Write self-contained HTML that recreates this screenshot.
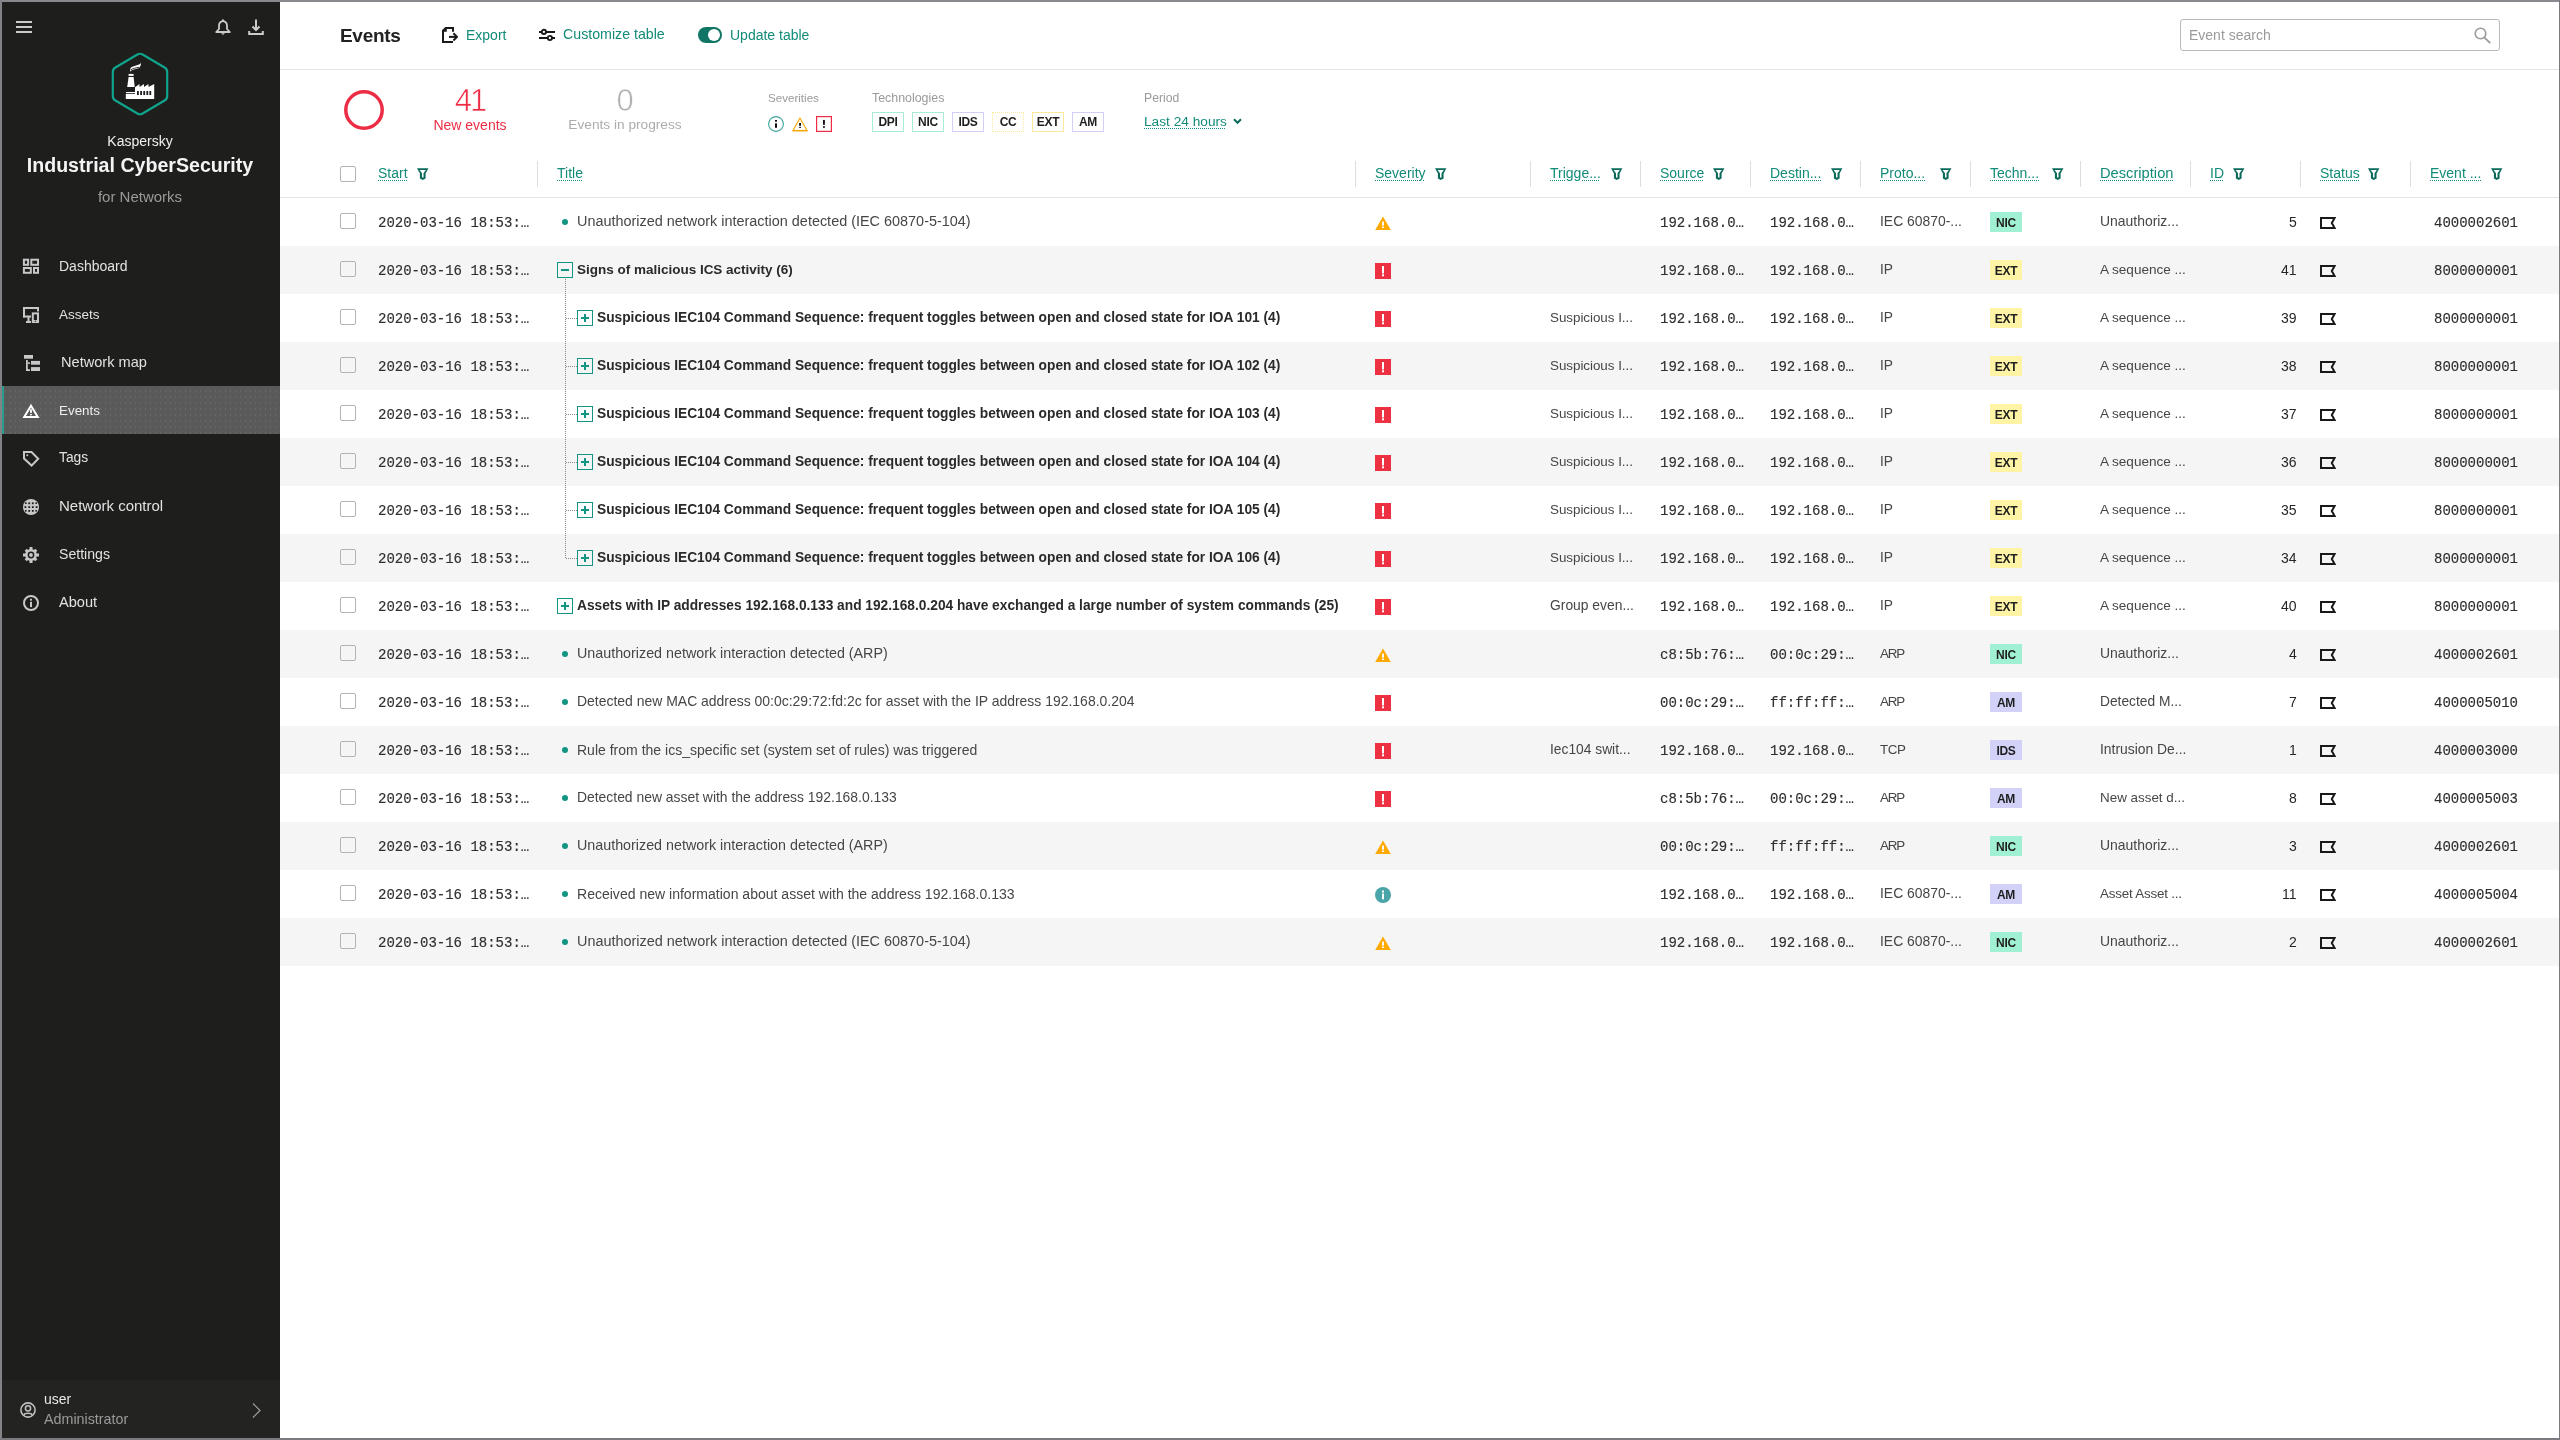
<!DOCTYPE html>
<html><head><meta charset="utf-8">
<style>
*{box-sizing:border-box;margin:0;padding:0}
html,body{width:2560px;height:1440px;overflow:hidden;background:#fff;font-family:"Liberation Sans",sans-serif;position:relative}
.t{position:absolute;line-height:1;white-space:nowrap;will-change:transform}
.b{position:absolute;display:block}
.u{text-decoration:underline dotted;text-underline-offset:2px;text-decoration-thickness:1px}
</style></head><body>

<div class="b" style="left:0px;top:0px;width:2560px;height:2px;background:#88898c"></div>
<div class="b" style="left:0px;top:0px;width:2px;height:1440px;background:#828386"></div>
<div class="b" style="left:0px;top:1438px;width:2560px;height:2px;background:#7a7b7e"></div>
<div class="b" style="left:2559px;top:0px;width:1px;height:1440px;background:#7a7b7e"></div>
<div class="b" style="left:2px;top:2px;width:278px;height:1436px;background:#1e1e1d"></div>
<svg class="b" style="left:16px;top:21px" width="16" height="12" viewBox="0 0 16 12"><rect x="0" y="0" width="16" height="2" fill="#cbcbcb"/><rect x="0" y="5" width="16" height="2" fill="#cbcbcb"/><rect x="0" y="10" width="16" height="2" fill="#cbcbcb"/></svg>
<svg class="b" style="left:215px;top:19px" width="16" height="16" viewBox="0 0 16 16"><path d="M8 1.2 L9 2.3 C11.3 2.8 12 4.8 12 7 L12 10 L14.8 13 L1.2 13 L4 10 L4 7 C4 4.8 4.7 2.8 7 2.3 Z" fill="none" stroke="#cbcbcb" stroke-width="1.8" stroke-linejoin="round"/><path d="M6 14.2 L10 14.2 L8 16 Z" fill="#cbcbcb"/></svg>
<svg class="b" style="left:248px;top:19px" width="16" height="16" viewBox="0 0 16 16"><path d="M8 0.5 L8 10.5" stroke="#cbcbcb" stroke-width="2"/><path d="M4.5 7.5 L8 11 L11.5 7.5" fill="none" stroke="#cbcbcb" stroke-width="2"/><path d="M1.2 12 L1.2 15 L14.8 15 L14.8 12" fill="none" stroke="#cbcbcb" stroke-width="2"/></svg>
<svg class="b" style="left:110px;top:52px" width="60" height="64" viewBox="0 0 60 64"><path d="M27.41 2.52 Q30 1.0 32.59 2.52 L54.61 15.48 Q57.2 17.0 57.20 20.00 L57.20 44.00 Q57.2 47.0 54.61 48.52 L32.59 61.48 Q30 63.0 27.41 61.48 L5.39 48.52 Q2.8 47.0 2.80 44.00 L2.80 20.00 Q2.8 17.0 5.39 15.48 Z" fill="none" stroke="#0fa58b" stroke-width="2.2" stroke-linejoin="round"/><g fill="#fff"><path d="M17.2 35 L18.6 25 L23.6 25 L24.7 35 Z"/><rect x="18.6" y="21.9" width="5" height="2"/><rect x="16" y="40" width="9" height="1.2"/><path d="M15.8 42 L25 42 L25 35.2 L29.5 32 L29.5 35 L34 32 L34 35 L38.5 32 L38.5 35 L44.2 32 L44.2 47 L15.8 47 Z"/><path d="M20 19.7 C22 17.6 26 17 28.6 16.3 C30.2 15.4 31 13 31.1 11.1 C29.5 12.9 26 13.5 23 14.4 C21.4 15 20.3 15.8 20.3 17 Z"/></g><path d="M20.8 17.8 C23 16.4 26 15.9 29 15.2" fill="none" stroke="#1e1e1d" stroke-width="0.9"/><g fill="#1e1e1d"><rect x="27" y="39" width="1.8" height="4"/><rect x="30.2" y="39" width="1.8" height="4"/><rect x="33.3" y="39" width="1.8" height="4"/><rect x="36.4" y="39" width="1.8" height="4"/><rect x="39.4" y="39" width="1.8" height="4"/></g></svg>
<div class="t" style="left:-60px;width:400px;text-align:center;top:134.15px;font-size:14px;color:#f0f0f0;font-weight:normal;font-family:'Liberation Sans',sans-serif;">Kaspersky</div>
<div class="t" style="left:-60px;width:400px;text-align:center;top:156.41px;font-size:19.6px;color:#f4f4f4;font-weight:bold;font-family:'Liberation Sans',sans-serif;">Industrial CyberSecurity</div>
<div class="t" style="left:-60px;width:400px;text-align:center;top:189.30px;font-size:15px;color:#9a9a9a;font-weight:normal;font-family:'Liberation Sans',sans-serif;">for Networks</div>
<div class="b" style="left:2px;top:386px;width:278px;height:48px;background-color:#5a5a5a;background-image:radial-gradient(circle,#686868 0.5px,transparent 0.8px);background-size:5px 6px;background-position:1px 2px"></div>
<div class="b" style="left:2px;top:386px;width:2px;height:48px;background:#2a9d8f"></div>
<div class="t" style="left:59px;top:259.15px;font-size:14px;color:#e2e2e2;font-weight:normal;font-family:'Liberation Sans',sans-serif;">Dashboard</div>
<div class="t" style="left:59px;top:307.57px;font-size:13.5px;color:#e2e2e2;font-weight:normal;font-family:'Liberation Sans',sans-serif;">Assets</div>
<div class="t" style="left:61px;top:354.64px;font-size:14.6px;color:#e2e2e2;font-weight:normal;font-family:'Liberation Sans',sans-serif;">Network map</div>
<div class="t" style="left:59px;top:403.66px;font-size:13.4px;color:#eeeeee;font-weight:normal;font-family:'Liberation Sans',sans-serif;">Events</div>
<div class="t" style="left:59px;top:451.32px;font-size:13.8px;color:#e2e2e2;font-weight:normal;font-family:'Liberation Sans',sans-serif;">Tags</div>
<div class="t" style="left:59px;top:498.30px;font-size:15px;color:#e2e2e2;font-weight:normal;font-family:'Liberation Sans',sans-serif;">Network control</div>
<div class="t" style="left:59px;top:547.06px;font-size:14.1px;color:#e2e2e2;font-weight:normal;font-family:'Liberation Sans',sans-serif;">Settings</div>
<div class="t" style="left:59px;top:594.64px;font-size:14.6px;color:#e2e2e2;font-weight:normal;font-family:'Liberation Sans',sans-serif;">About</div>
<svg class="b" style="left:22px;top:258px" width="18" height="17" viewBox="0 0 18 17"><g fill="none" stroke="#c8c8c8" stroke-width="2"><rect x="1.9" y="1.7" width="4.2" height="5.1"/><rect x="9.3" y="1.7" width="6.7" height="5.1"/><rect x="1.9" y="10" width="6.9" height="4.8"/><rect x="12" y="10" width="4" height="4.8"/></g></svg>
<svg class="b" style="left:22px;top:306px" width="18" height="18" viewBox="0 0 18 18"><g fill="#c8c8c8"><rect x="1" y="1" width="16" height="2"/><rect x="1" y="1" width="2" height="10.5"/><rect x="1" y="9.5" width="8" height="2"/><rect x="15" y="1" width="2" height="4.5"/><rect x="4" y="15" width="5" height="2"/><rect x="5.5" y="11" width="2" height="4"/><rect x="9.8" y="6.4" width="7.2" height="10.6"/></g><rect x="11.8" y="8.4" width="3.2" height="5.6" fill="#1e1e1d"/><rect x="12.7" y="14.7" width="1.4" height="1" fill="#1e1e1d"/></svg>
<svg class="b" style="left:24px;top:355px" width="16" height="16" viewBox="0 0 16 16"><g fill="#c8c8c8"><rect x="0" y="0" width="9" height="3.7"/><rect x="2" y="5" width="1.8" height="11"/><rect x="2" y="14.2" width="4" height="1.8"/><rect x="3.8" y="7.3" width="2.2" height="1.6"/><rect x="7" y="5.9" width="9" height="3.8"/><rect x="7" y="12.1" width="9" height="3.9"/></g></svg>
<svg class="b" style="left:22px;top:403px" width="18" height="16" viewBox="0 0 18 16"><path d="M9 2.8 L15.8 14 L2.2 14 Z" fill="none" stroke="#fff" stroke-width="2" stroke-linejoin="miter"/><rect x="8.1" y="6.3" width="1.8" height="3.6" fill="#fff"/><rect x="8.1" y="11" width="1.8" height="1.3" fill="#fff"/></svg>
<svg class="b" style="left:22px;top:450px" width="18" height="18" viewBox="0 0 18 18"><path d="M2 2 L9.5 2 L16.2 8.8 L9.6 15.6 L2 8.6 Z" fill="none" stroke="#c8c8c8" stroke-width="2" stroke-linejoin="miter"/><circle cx="5.3" cy="5.3" r="1" fill="#c8c8c8"/></svg>
<svg class="b" style="left:23px;top:499px" width="16" height="16" viewBox="0 0 16 16"><circle cx="8" cy="8" r="8" fill="#c8c8c8"/><g fill="#1e1e1d"><rect x="2" y="3.4" width="1.6" height="1.6"/><rect x="5.3" y="3.4" width="1.8" height="1.8"/><rect x="8.9" y="3.4" width="1.8" height="1.8"/><rect x="12.4" y="3.4" width="1.6" height="1.6"/><rect x="1.5" y="7.2" width="1.8" height="1.8"/><rect x="5.3" y="7.2" width="1.8" height="1.8"/><rect x="8.9" y="7.2" width="1.8" height="1.8"/><rect x="12.7" y="7.2" width="1.8" height="1.8"/><rect x="2" y="11" width="1.6" height="1.6"/><rect x="5.3" y="11" width="1.8" height="1.8"/><rect x="8.9" y="11" width="1.8" height="1.8"/><rect x="12.4" y="11" width="1.6" height="1.6"/></g></svg>
<svg class="b" style="left:23px;top:547px" width="16" height="16" viewBox="0 0 16 16"><g fill="#c8c8c8"><circle cx="8" cy="8" r="5.9"/><rect x="6.5" y="0" width="3" height="16"/><rect x="0" y="6.5" width="16" height="3"/><rect x="6.5" y="0.5" width="3" height="15" transform="rotate(45 8 8)"/><rect x="6.5" y="0.5" width="3" height="15" transform="rotate(-45 8 8)"/></g><circle cx="8" cy="8" r="3.4" fill="#1e1e1d"/><circle cx="8" cy="8" r="1.9" fill="#c8c8c8"/></svg>
<svg class="b" style="left:23px;top:595px" width="16" height="16" viewBox="0 0 16 16"><circle cx="8" cy="8" r="7" fill="none" stroke="#c8c8c8" stroke-width="2"/><rect x="7" y="6.8" width="2" height="5.3" fill="#c8c8c8"/><rect x="7" y="3.8" width="2" height="1.8" fill="#c8c8c8"/></svg>
<div class="b" style="left:2px;top:1380px;width:278px;height:58px;background:#232322"></div>
<svg class="b" style="left:20px;top:1402px" width="16" height="16" viewBox="0 0 16 16"><circle cx="8" cy="8" r="7.1" fill="none" stroke="#c0c0c0" stroke-width="1.6"/><circle cx="8" cy="6.3" r="2.6" fill="none" stroke="#c0c0c0" stroke-width="1.5"/><path d="M3.8 13.2 C4.8 10.6 11.2 10.6 12.2 13.2" fill="none" stroke="#c0c0c0" stroke-width="1.5"/></svg>
<div class="t" style="left:44px;top:1392.15px;font-size:14px;color:#e8e8e8;font-weight:normal;font-family:'Liberation Sans',sans-serif;">user</div>
<div class="t" style="left:44px;top:1411.90px;font-size:14.3px;color:#9a9a9a;font-weight:normal;font-family:'Liberation Sans',sans-serif;">Administrator</div>
<svg class="b" style="left:252px;top:1403px" width="9" height="15" viewBox="0 0 9 15"><path d="M1 0.5 L8 7.5 L1 14.5" fill="none" stroke="#a0a0a0" stroke-width="1.2"/></svg>
<div class="b" style="left:280px;top:69px;width:2279px;height:1px;background:#e4e4e4"></div>
<div class="t" style="left:340px;top:25.92px;font-size:19px;color:#222;font-weight:bold;font-family:'Liberation Sans',sans-serif;letter-spacing:-0.3px;">Events</div>
<svg class="b" style="left:442px;top:27px" width="16" height="16" viewBox="0 0 16 16"><path d="M1 4 L1 15 L11 15 M3.5 1 L12 1 M11 0 L11 4.7" fill="none" stroke="#1a1a1a" stroke-width="2"/><path d="M0 3.3 L3.3 0 L4.8 0 L4.8 4.8 L0 4.8 Z" fill="#1a1a1a"/><path d="M7 9.9 L14.3 9.9" stroke="#1a1a1a" stroke-width="2"/><path d="M11.4 6.3 L15 9.9 L11.4 13.5" fill="none" stroke="#1a1a1a" stroke-width="2"/></svg>
<div class="t" style="left:466px;top:27.65px;font-size:14px;color:#128b78;font-weight:normal;font-family:'Liberation Sans',sans-serif;">Export</div>
<svg class="b" style="left:539px;top:28px" width="16" height="14" viewBox="0 0 16 14"><path d="M0 3.9 L16 3.9 M0 10 L16 10" stroke="#1a1a1a" stroke-width="2"/><circle cx="4.9" cy="3.9" r="2.1" fill="#fff" stroke="#1a1a1a" stroke-width="1.9"/><circle cx="10.9" cy="10" r="2.1" fill="#fff" stroke="#1a1a1a" stroke-width="1.9"/></svg>
<div class="t" style="left:563px;top:27.48px;font-size:14.2px;color:#128b78;font-weight:normal;font-family:'Liberation Sans',sans-serif;">Customize table</div>
<div class="b" style="left:698px;top:27px;width:24px;height:16px;background:#107565;border-radius:8px"></div>
<div class="b" style="left:708px;top:29px;width:12px;height:12px;background:#fff;border-radius:6px"></div>
<div class="t" style="left:730px;top:27.65px;font-size:14px;color:#128b78;font-weight:normal;font-family:'Liberation Sans',sans-serif;">Update table</div>
<div class="b" style="left:2180px;top:19px;width:320px;height:32px;border:1px solid #b9b9b9;border-radius:3px;background:#fff"></div>
<div class="t" style="left:2189px;top:27.65px;font-size:14px;color:#9a9a9a;font-weight:normal;font-family:'Liberation Sans',sans-serif;">Event search</div>
<svg class="b" style="left:2474px;top:27px" width="18" height="17" viewBox="0 0 18 17"><circle cx="6.5" cy="6.5" r="5.3" fill="none" stroke="#9a9a9a" stroke-width="1.6"/><path d="M10.3 10.3 L16.2 16.2" stroke="#9a9a9a" stroke-width="1.8"/></svg>
<svg class="b" style="left:344px;top:90px" width="40" height="40" viewBox="0 0 40 40"><circle cx="20" cy="20" r="18.2" fill="none" stroke="#ec2d45" stroke-width="3.5"/></svg>
<div class="t" style="left:270px;width:400px;text-align:center;top:84.76px;font-size:31px;color:#ec2d45;font-weight:normal;font-family:'Liberation Sans',sans-serif;letter-spacing:-2px;-webkit-text-stroke:0.6px #fff;">41</div>
<div class="t" style="left:270px;width:400px;text-align:center;top:118.15px;font-size:14px;color:#ec2d45;font-weight:normal;font-family:'Liberation Sans',sans-serif;">New events</div>
<div class="t" style="left:425px;width:400px;text-align:center;top:84.76px;font-size:31px;color:#b0b0b0;font-weight:normal;font-family:'Liberation Sans',sans-serif;-webkit-text-stroke:0.6px #fff;">0</div>
<div class="t" style="left:425px;width:400px;text-align:center;top:118.40px;font-size:13.7px;color:#acacac;font-weight:normal;font-family:'Liberation Sans',sans-serif;">Events in progress</div>
<div class="t" style="left:768px;top:92.18px;font-size:11.6px;color:#9a9a9a;font-weight:normal;font-family:'Liberation Sans',sans-serif;">Severities</div>
<div class="t" style="left:872px;top:91.50px;font-size:12.4px;color:#9a9a9a;font-weight:normal;font-family:'Liberation Sans',sans-serif;">Technologies</div>
<div class="t" style="left:1144px;top:91.67px;font-size:12.2px;color:#9a9a9a;font-weight:normal;font-family:'Liberation Sans',sans-serif;">Period</div>
<svg class="b" style="left:768px;top:116px" width="16" height="16" viewBox="0 0 16 16"><circle cx="8" cy="8" r="7.4" fill="none" stroke="#3aa8a0" stroke-width="1.1"/><rect x="7" y="7.3" width="2" height="4.5" fill="#111"/><rect x="7" y="4" width="2" height="1.7" fill="#111"/></svg>
<svg class="b" style="left:792px;top:116px" width="16" height="16" viewBox="0 0 16 16"><path d="M8 2.2 L15.2 14.6 L0.8 14.6 Z" fill="none" stroke="#f6a800" stroke-width="1.1"/><path d="M0.8 14.6 L15.2 14.6" stroke="#f6a800" stroke-width="1.4"/><rect x="7.1" y="7" width="1.9" height="2.8" fill="#111"/><rect x="7.1" y="10.9" width="1.9" height="1" fill="#111"/></svg>
<svg class="b" style="left:816px;top:116px" width="16" height="16" viewBox="0 0 16 16"><rect x="0.6" y="0.6" width="14.8" height="14.8" fill="none" stroke="#ee2d45" stroke-width="1.2"/><rect x="7" y="4" width="1.9" height="4.8" fill="#111"/><rect x="7" y="10.2" width="1.9" height="1.6" fill="#111"/></svg>
<div class="b" style="left:872px;top:112px;width:32px;height:20px;border:1px solid #a6ecd6;background:#fff"></div>
<div class="t" style="left:688px;width:400px;text-align:center;top:116.34px;font-size:12px;color:#1e1e1e;font-weight:bold;font-family:'Liberation Sans',sans-serif;letter-spacing:-0.3px;">DPI</div>
<div class="b" style="left:912px;top:112px;width:32px;height:20px;border:1px solid #a6ecd6;background:#fff"></div>
<div class="t" style="left:728px;width:400px;text-align:center;top:116.34px;font-size:12px;color:#1e1e1e;font-weight:bold;font-family:'Liberation Sans',sans-serif;letter-spacing:-0.3px;">NIC</div>
<div class="b" style="left:952px;top:112px;width:32px;height:20px;border:1px solid #cfcff7;background:#fff"></div>
<div class="t" style="left:768px;width:400px;text-align:center;top:116.34px;font-size:12px;color:#1e1e1e;font-weight:bold;font-family:'Liberation Sans',sans-serif;letter-spacing:-0.3px;">IDS</div>
<div class="b" style="left:992px;top:112px;width:32px;height:20px;border:1px dotted #fbe89a;background:#fff"></div>
<div class="t" style="left:808px;width:400px;text-align:center;top:116.34px;font-size:12px;color:#1e1e1e;font-weight:bold;font-family:'Liberation Sans',sans-serif;letter-spacing:-0.3px;">CC</div>
<div class="b" style="left:1032px;top:112px;width:32px;height:20px;border:1px solid #fbe89a;background:#fff"></div>
<div class="t" style="left:848px;width:400px;text-align:center;top:116.34px;font-size:12px;color:#1e1e1e;font-weight:bold;font-family:'Liberation Sans',sans-serif;letter-spacing:-0.3px;">EXT</div>
<div class="b" style="left:1072px;top:112px;width:32px;height:20px;border:1px solid #cfcff7;background:#fff"></div>
<div class="t" style="left:888px;width:400px;text-align:center;top:116.34px;font-size:12px;color:#1e1e1e;font-weight:bold;font-family:'Liberation Sans',sans-serif;letter-spacing:-0.3px;">AM</div>
<div class="t" style="left:1144px;top:114.90px;font-size:13.7px;color:#128b78;font-weight:normal;font-family:'Liberation Sans',sans-serif;"><span class="u">Last 24 hours</span></div>
<svg class="b" style="left:1233px;top:118px" width="9" height="7" viewBox="0 0 9 7"><path d="M1 1.2 L4.5 4.8 L8 1.2" fill="none" stroke="#0b6b5b" stroke-width="2"/></svg>
<div class="b" style="left:280px;top:197px;width:2279px;height:1px;background:#e4e4e4"></div>
<div class="b" style="left:340px;top:166px;width:16px;height:16px;border:1px solid #b3b3b3;border-radius:2px;background:transparent"></div>
<div class="t" style="left:378px;top:166.15px;font-size:14px;color:#128b78;font-weight:normal;font-family:'Liberation Sans',sans-serif;"><span class="u">Start</span></div>
<svg class="b" style="left:417px;top:168px" width="12" height="12" viewBox="0 0 12 12"><path d="M0 0.2 L11.4 0.2 L8.6 5.6 L8.6 10.6 L5.7 12 L2.9 10.6 L2.9 5.6 Z" fill="#0b6b5b"/><path d="M2.6 2 L8.8 2 L6.5 5.3 L6.5 9.6 L5 9.6 L5 5.3 Z" fill="#fff"/></svg>
<div class="b" style="left:537px;top:161px;width:1px;height:26px;background:#dedede"></div>
<div class="t" style="left:557px;top:166.15px;font-size:14px;color:#128b78;font-weight:normal;font-family:'Liberation Sans',sans-serif;"><span class="u">Title</span></div>
<div class="b" style="left:1355px;top:161px;width:1px;height:26px;background:#dedede"></div>
<div class="t" style="left:1375px;top:166.15px;font-size:14px;color:#128b78;font-weight:normal;font-family:'Liberation Sans',sans-serif;"><span class="u">Severity</span></div>
<svg class="b" style="left:1435px;top:168px" width="12" height="12" viewBox="0 0 12 12"><path d="M0 0.2 L11.4 0.2 L8.6 5.6 L8.6 10.6 L5.7 12 L2.9 10.6 L2.9 5.6 Z" fill="#0b6b5b"/><path d="M2.6 2 L8.8 2 L6.5 5.3 L6.5 9.6 L5 9.6 L5 5.3 Z" fill="#fff"/></svg>
<div class="b" style="left:1530px;top:161px;width:1px;height:26px;background:#dedede"></div>
<div class="t" style="left:1550px;top:166.15px;font-size:14px;color:#128b78;font-weight:normal;font-family:'Liberation Sans',sans-serif;"><span class="u">Trigge...</span></div>
<svg class="b" style="left:1611px;top:168px" width="12" height="12" viewBox="0 0 12 12"><path d="M0 0.2 L11.4 0.2 L8.6 5.6 L8.6 10.6 L5.7 12 L2.9 10.6 L2.9 5.6 Z" fill="#0b6b5b"/><path d="M2.6 2 L8.8 2 L6.5 5.3 L6.5 9.6 L5 9.6 L5 5.3 Z" fill="#fff"/></svg>
<div class="b" style="left:1640px;top:161px;width:1px;height:26px;background:#dedede"></div>
<div class="t" style="left:1660px;top:166.15px;font-size:14px;color:#128b78;font-weight:normal;font-family:'Liberation Sans',sans-serif;"><span class="u">Source</span></div>
<svg class="b" style="left:1713px;top:168px" width="12" height="12" viewBox="0 0 12 12"><path d="M0 0.2 L11.4 0.2 L8.6 5.6 L8.6 10.6 L5.7 12 L2.9 10.6 L2.9 5.6 Z" fill="#0b6b5b"/><path d="M2.6 2 L8.8 2 L6.5 5.3 L6.5 9.6 L5 9.6 L5 5.3 Z" fill="#fff"/></svg>
<div class="b" style="left:1750px;top:161px;width:1px;height:26px;background:#dedede"></div>
<div class="t" style="left:1770px;top:166.15px;font-size:14px;color:#128b78;font-weight:normal;font-family:'Liberation Sans',sans-serif;"><span class="u">Destin...</span></div>
<svg class="b" style="left:1831px;top:168px" width="12" height="12" viewBox="0 0 12 12"><path d="M0 0.2 L11.4 0.2 L8.6 5.6 L8.6 10.6 L5.7 12 L2.9 10.6 L2.9 5.6 Z" fill="#0b6b5b"/><path d="M2.6 2 L8.8 2 L6.5 5.3 L6.5 9.6 L5 9.6 L5 5.3 Z" fill="#fff"/></svg>
<div class="b" style="left:1860px;top:161px;width:1px;height:26px;background:#dedede"></div>
<div class="t" style="left:1880px;top:166.15px;font-size:14px;color:#128b78;font-weight:normal;font-family:'Liberation Sans',sans-serif;"><span class="u">Proto...</span></div>
<svg class="b" style="left:1940px;top:168px" width="12" height="12" viewBox="0 0 12 12"><path d="M0 0.2 L11.4 0.2 L8.6 5.6 L8.6 10.6 L5.7 12 L2.9 10.6 L2.9 5.6 Z" fill="#0b6b5b"/><path d="M2.6 2 L8.8 2 L6.5 5.3 L6.5 9.6 L5 9.6 L5 5.3 Z" fill="#fff"/></svg>
<div class="b" style="left:1970px;top:161px;width:1px;height:26px;background:#dedede"></div>
<div class="t" style="left:1990px;top:166.15px;font-size:14px;color:#128b78;font-weight:normal;font-family:'Liberation Sans',sans-serif;"><span class="u">Techn...</span></div>
<svg class="b" style="left:2052px;top:168px" width="12" height="12" viewBox="0 0 12 12"><path d="M0 0.2 L11.4 0.2 L8.6 5.6 L8.6 10.6 L5.7 12 L2.9 10.6 L2.9 5.6 Z" fill="#0b6b5b"/><path d="M2.6 2 L8.8 2 L6.5 5.3 L6.5 9.6 L5 9.6 L5 5.3 Z" fill="#fff"/></svg>
<div class="b" style="left:2080px;top:161px;width:1px;height:26px;background:#dedede"></div>
<div class="t" style="left:2100px;top:165.56px;font-size:14.7px;color:#128b78;font-weight:normal;font-family:'Liberation Sans',sans-serif;"><span class="u">Description</span></div>
<div class="b" style="left:2190px;top:161px;width:1px;height:26px;background:#dedede"></div>
<div class="t" style="left:2210px;top:166.15px;font-size:14px;color:#128b78;font-weight:normal;font-family:'Liberation Sans',sans-serif;"><span class="u">ID</span></div>
<svg class="b" style="left:2233px;top:168px" width="12" height="12" viewBox="0 0 12 12"><path d="M0 0.2 L11.4 0.2 L8.6 5.6 L8.6 10.6 L5.7 12 L2.9 10.6 L2.9 5.6 Z" fill="#0b6b5b"/><path d="M2.6 2 L8.8 2 L6.5 5.3 L6.5 9.6 L5 9.6 L5 5.3 Z" fill="#fff"/></svg>
<div class="b" style="left:2300px;top:161px;width:1px;height:26px;background:#dedede"></div>
<div class="t" style="left:2320px;top:166.15px;font-size:14px;color:#128b78;font-weight:normal;font-family:'Liberation Sans',sans-serif;"><span class="u">Status</span></div>
<svg class="b" style="left:2368px;top:168px" width="12" height="12" viewBox="0 0 12 12"><path d="M0 0.2 L11.4 0.2 L8.6 5.6 L8.6 10.6 L5.7 12 L2.9 10.6 L2.9 5.6 Z" fill="#0b6b5b"/><path d="M2.6 2 L8.8 2 L6.5 5.3 L6.5 9.6 L5 9.6 L5 5.3 Z" fill="#fff"/></svg>
<div class="b" style="left:2410px;top:161px;width:1px;height:26px;background:#dedede"></div>
<div class="t" style="left:2430px;top:166.15px;font-size:14px;color:#128b78;font-weight:normal;font-family:'Liberation Sans',sans-serif;"><span class="u">Event ...</span></div>
<svg class="b" style="left:2491px;top:168px" width="12" height="12" viewBox="0 0 12 12"><path d="M0 0.2 L11.4 0.2 L8.6 5.6 L8.6 10.6 L5.7 12 L2.9 10.6 L2.9 5.6 Z" fill="#0b6b5b"/><path d="M2.6 2 L8.8 2 L6.5 5.3 L6.5 9.6 L5 9.6 L5 5.3 Z" fill="#fff"/></svg>
<div class="b" style="left:340px;top:213px;width:16px;height:16px;border:1px solid #b3b3b3;border-radius:2px;background:transparent"></div>
<div class="t" style="left:378px;top:216.27px;font-size:14px;color:#2e2e2e;font-weight:normal;font-family:'Liberation Mono',monospace;-webkit-text-stroke:0.15px #2e2e2e;">2020-03-16 18:53:…</div>
<div class="b" style="left:562px;top:219px;width:6px;height:6px;background:#139583;border-radius:3px"></div>
<div class="t" style="left:577px;top:214.18px;font-size:14.436px;color:#464646;font-weight:normal;font-family:'Liberation Sans',sans-serif;">Unauthorized network interaction detected (IEC 60870-5-104)</div>
<svg class="b" style="left:1375px;top:216px" width="16" height="14" viewBox="0 0 16 14"><path d="M8 0.5 L15.8 14 L0.2 14 Z" fill="#ffa800"/><rect x="7" y="5.6" width="2" height="4" fill="#fff"/><rect x="7" y="10.5" width="2" height="1.5" fill="#fff"/></svg>
<div class="t" style="left:1660px;top:216.27px;font-size:14px;color:#2e2e2e;font-weight:normal;font-family:'Liberation Mono',monospace;-webkit-text-stroke:0.15px #2e2e2e;">192.168.0…</div>
<div class="t" style="left:1770px;top:216.27px;font-size:14px;color:#2e2e2e;font-weight:normal;font-family:'Liberation Mono',monospace;-webkit-text-stroke:0.15px #2e2e2e;">192.168.0…</div>
<div class="t" style="left:1880px;top:214.62px;font-size:13.917px;color:#464646;font-weight:normal;font-family:'Liberation Sans',sans-serif;">IEC 60870-...</div>
<div class="b" style="left:1990px;top:212px;width:32px;height:20px;background:#a0f0d3"></div>
<div class="t" style="left:1806px;width:400px;text-align:center;top:216.64px;font-size:12px;color:#1e1e1e;font-weight:bold;font-family:'Liberation Sans',sans-serif;letter-spacing:-0.3px;">NIC</div>
<div class="t" style="left:2100px;top:214.60px;font-size:13.934px;color:#464646;font-weight:normal;font-family:'Liberation Sans',sans-serif;">Unauthoriz...</div>
<div class="t" style="right:263px;top:214.55px;font-size:14px;color:#262626;font-weight:normal;font-family:'Liberation Sans',sans-serif;">5</div>
<svg class="b" style="left:2320px;top:217px" width="16" height="12" viewBox="0 0 16 12"><path d="M1 1 L14.6 1 L11.8 6 L14.6 11 L1 11 Z" fill="none" stroke="#1a1a1a" stroke-width="2" stroke-linejoin="miter"/></svg>
<div class="t" style="right:42px;top:216.27px;font-size:14px;color:#2e2e2e;font-weight:normal;font-family:'Liberation Mono',monospace;-webkit-text-stroke:0.15px #2e2e2e;">4000002601</div>
<div class="b" style="left:280px;top:246px;width:2279px;height:48px;background:#f5f5f5"></div>
<div class="b" style="left:340px;top:261px;width:16px;height:16px;border:1px solid #b3b3b3;border-radius:2px;background:transparent"></div>
<div class="t" style="left:378px;top:264.27px;font-size:14px;color:#2e2e2e;font-weight:normal;font-family:'Liberation Mono',monospace;-webkit-text-stroke:0.15px #2e2e2e;">2020-03-16 18:53:…</div>
<div class="b" style="left:557px;top:262px;width:16px;height:16px;border:1px solid #139583"></div>
<div class="b" style="left:561px;top:269px;width:8px;height:2px;background:#139583"></div>
<div class="t" style="left:577px;top:262.97px;font-size:13.497px;color:#2a2a2a;font-weight:bold;font-family:'Liberation Sans',sans-serif;">Signs of malicious ICS activity (6)</div>
<svg class="b" style="left:1375px;top:263px" width="16" height="16" viewBox="0 0 16 16"><rect x="0" y="0" width="16" height="16" fill="#ee3043"/><rect x="7" y="3" width="2" height="7.5" fill="#fff"/><rect x="7" y="11.3" width="2" height="2" fill="#fff"/></svg>
<div class="t" style="left:1660px;top:264.27px;font-size:14px;color:#2e2e2e;font-weight:normal;font-family:'Liberation Mono',monospace;-webkit-text-stroke:0.15px #2e2e2e;">192.168.0…</div>
<div class="t" style="left:1770px;top:264.27px;font-size:14px;color:#2e2e2e;font-weight:normal;font-family:'Liberation Mono',monospace;-webkit-text-stroke:0.15px #2e2e2e;">192.168.0…</div>
<div class="t" style="left:1880px;top:262.75px;font-size:13.759px;color:#464646;font-weight:normal;font-family:'Liberation Sans',sans-serif;">IP</div>
<div class="b" style="left:1990px;top:260px;width:32px;height:20px;background:#fff4a6"></div>
<div class="t" style="left:1806px;width:400px;text-align:center;top:264.64px;font-size:12px;color:#1e1e1e;font-weight:bold;font-family:'Liberation Sans',sans-serif;letter-spacing:-0.3px;">EXT</div>
<div class="t" style="left:2100px;top:262.91px;font-size:13.569px;color:#464646;font-weight:normal;font-family:'Liberation Sans',sans-serif;">A sequence ...</div>
<div class="t" style="right:263px;top:262.55px;font-size:14px;color:#262626;font-weight:normal;font-family:'Liberation Sans',sans-serif;">41</div>
<svg class="b" style="left:2320px;top:265px" width="16" height="12" viewBox="0 0 16 12"><path d="M1 1 L14.6 1 L11.8 6 L14.6 11 L1 11 Z" fill="none" stroke="#1a1a1a" stroke-width="2" stroke-linejoin="miter"/></svg>
<div class="t" style="right:42px;top:264.27px;font-size:14px;color:#2e2e2e;font-weight:normal;font-family:'Liberation Mono',monospace;-webkit-text-stroke:0.15px #2e2e2e;">8000000001</div>
<div class="b" style="left:340px;top:309px;width:16px;height:16px;border:1px solid #b3b3b3;border-radius:2px;background:transparent"></div>
<div class="t" style="left:378px;top:312.27px;font-size:14px;color:#2e2e2e;font-weight:normal;font-family:'Liberation Mono',monospace;-webkit-text-stroke:0.15px #2e2e2e;">2020-03-16 18:53:…</div>
<div class="b" style="left:577px;top:310px;width:16px;height:16px;border:1px solid #139583"></div>
<div class="b" style="left:581px;top:317px;width:8px;height:2px;background:#139583"></div>
<div class="b" style="left:584px;top:314px;width:2px;height:8px;background:#139583"></div>
<div class="t" style="left:597px;top:310.75px;font-size:13.764px;color:#2a2a2a;font-weight:bold;font-family:'Liberation Sans',sans-serif;">Suspicious IEC104 Command Sequence: frequent toggles between open and closed state for IOA 101 (4)</div>
<div class="b" style="left:566px;top:318px;width:11px;height:1px;background-image:linear-gradient(to right,#888 50%,transparent 50%);background-size:2px 1px"></div>
<svg class="b" style="left:1375px;top:311px" width="16" height="16" viewBox="0 0 16 16"><rect x="0" y="0" width="16" height="16" fill="#ee3043"/><rect x="7" y="3" width="2" height="7.5" fill="#fff"/><rect x="7" y="11.3" width="2" height="2" fill="#fff"/></svg>
<div class="t" style="left:1550px;top:311.06px;font-size:13.4px;color:#464646;font-weight:normal;font-family:'Liberation Sans',sans-serif;letter-spacing:-0.030px;">Suspicious I...</div>
<div class="t" style="left:1660px;top:312.27px;font-size:14px;color:#2e2e2e;font-weight:normal;font-family:'Liberation Mono',monospace;-webkit-text-stroke:0.15px #2e2e2e;">192.168.0…</div>
<div class="t" style="left:1770px;top:312.27px;font-size:14px;color:#2e2e2e;font-weight:normal;font-family:'Liberation Mono',monospace;-webkit-text-stroke:0.15px #2e2e2e;">192.168.0…</div>
<div class="t" style="left:1880px;top:310.75px;font-size:13.759px;color:#464646;font-weight:normal;font-family:'Liberation Sans',sans-serif;">IP</div>
<div class="b" style="left:1990px;top:308px;width:32px;height:20px;background:#fff4a6"></div>
<div class="t" style="left:1806px;width:400px;text-align:center;top:312.64px;font-size:12px;color:#1e1e1e;font-weight:bold;font-family:'Liberation Sans',sans-serif;letter-spacing:-0.3px;">EXT</div>
<div class="t" style="left:2100px;top:310.91px;font-size:13.569px;color:#464646;font-weight:normal;font-family:'Liberation Sans',sans-serif;">A sequence ...</div>
<div class="t" style="right:263px;top:310.55px;font-size:14px;color:#262626;font-weight:normal;font-family:'Liberation Sans',sans-serif;">39</div>
<svg class="b" style="left:2320px;top:313px" width="16" height="12" viewBox="0 0 16 12"><path d="M1 1 L14.6 1 L11.8 6 L14.6 11 L1 11 Z" fill="none" stroke="#1a1a1a" stroke-width="2" stroke-linejoin="miter"/></svg>
<div class="t" style="right:42px;top:312.27px;font-size:14px;color:#2e2e2e;font-weight:normal;font-family:'Liberation Mono',monospace;-webkit-text-stroke:0.15px #2e2e2e;">8000000001</div>
<div class="b" style="left:280px;top:342px;width:2279px;height:48px;background:#f5f5f5"></div>
<div class="b" style="left:340px;top:357px;width:16px;height:16px;border:1px solid #b3b3b3;border-radius:2px;background:transparent"></div>
<div class="t" style="left:378px;top:360.27px;font-size:14px;color:#2e2e2e;font-weight:normal;font-family:'Liberation Mono',monospace;-webkit-text-stroke:0.15px #2e2e2e;">2020-03-16 18:53:…</div>
<div class="b" style="left:577px;top:358px;width:16px;height:16px;border:1px solid #139583"></div>
<div class="b" style="left:581px;top:365px;width:8px;height:2px;background:#139583"></div>
<div class="b" style="left:584px;top:362px;width:2px;height:8px;background:#139583"></div>
<div class="t" style="left:597px;top:358.75px;font-size:13.764px;color:#2a2a2a;font-weight:bold;font-family:'Liberation Sans',sans-serif;">Suspicious IEC104 Command Sequence: frequent toggles between open and closed state for IOA 102 (4)</div>
<div class="b" style="left:566px;top:366px;width:11px;height:1px;background-image:linear-gradient(to right,#888 50%,transparent 50%);background-size:2px 1px"></div>
<svg class="b" style="left:1375px;top:359px" width="16" height="16" viewBox="0 0 16 16"><rect x="0" y="0" width="16" height="16" fill="#ee3043"/><rect x="7" y="3" width="2" height="7.5" fill="#fff"/><rect x="7" y="11.3" width="2" height="2" fill="#fff"/></svg>
<div class="t" style="left:1550px;top:359.06px;font-size:13.4px;color:#464646;font-weight:normal;font-family:'Liberation Sans',sans-serif;letter-spacing:-0.030px;">Suspicious I...</div>
<div class="t" style="left:1660px;top:360.27px;font-size:14px;color:#2e2e2e;font-weight:normal;font-family:'Liberation Mono',monospace;-webkit-text-stroke:0.15px #2e2e2e;">192.168.0…</div>
<div class="t" style="left:1770px;top:360.27px;font-size:14px;color:#2e2e2e;font-weight:normal;font-family:'Liberation Mono',monospace;-webkit-text-stroke:0.15px #2e2e2e;">192.168.0…</div>
<div class="t" style="left:1880px;top:358.75px;font-size:13.759px;color:#464646;font-weight:normal;font-family:'Liberation Sans',sans-serif;">IP</div>
<div class="b" style="left:1990px;top:356px;width:32px;height:20px;background:#fff4a6"></div>
<div class="t" style="left:1806px;width:400px;text-align:center;top:360.64px;font-size:12px;color:#1e1e1e;font-weight:bold;font-family:'Liberation Sans',sans-serif;letter-spacing:-0.3px;">EXT</div>
<div class="t" style="left:2100px;top:358.91px;font-size:13.569px;color:#464646;font-weight:normal;font-family:'Liberation Sans',sans-serif;">A sequence ...</div>
<div class="t" style="right:263px;top:358.55px;font-size:14px;color:#262626;font-weight:normal;font-family:'Liberation Sans',sans-serif;">38</div>
<svg class="b" style="left:2320px;top:361px" width="16" height="12" viewBox="0 0 16 12"><path d="M1 1 L14.6 1 L11.8 6 L14.6 11 L1 11 Z" fill="none" stroke="#1a1a1a" stroke-width="2" stroke-linejoin="miter"/></svg>
<div class="t" style="right:42px;top:360.27px;font-size:14px;color:#2e2e2e;font-weight:normal;font-family:'Liberation Mono',monospace;-webkit-text-stroke:0.15px #2e2e2e;">8000000001</div>
<div class="b" style="left:340px;top:405px;width:16px;height:16px;border:1px solid #b3b3b3;border-radius:2px;background:transparent"></div>
<div class="t" style="left:378px;top:408.27px;font-size:14px;color:#2e2e2e;font-weight:normal;font-family:'Liberation Mono',monospace;-webkit-text-stroke:0.15px #2e2e2e;">2020-03-16 18:53:…</div>
<div class="b" style="left:577px;top:406px;width:16px;height:16px;border:1px solid #139583"></div>
<div class="b" style="left:581px;top:413px;width:8px;height:2px;background:#139583"></div>
<div class="b" style="left:584px;top:410px;width:2px;height:8px;background:#139583"></div>
<div class="t" style="left:597px;top:406.75px;font-size:13.764px;color:#2a2a2a;font-weight:bold;font-family:'Liberation Sans',sans-serif;">Suspicious IEC104 Command Sequence: frequent toggles between open and closed state for IOA 103 (4)</div>
<div class="b" style="left:566px;top:414px;width:11px;height:1px;background-image:linear-gradient(to right,#888 50%,transparent 50%);background-size:2px 1px"></div>
<svg class="b" style="left:1375px;top:407px" width="16" height="16" viewBox="0 0 16 16"><rect x="0" y="0" width="16" height="16" fill="#ee3043"/><rect x="7" y="3" width="2" height="7.5" fill="#fff"/><rect x="7" y="11.3" width="2" height="2" fill="#fff"/></svg>
<div class="t" style="left:1550px;top:407.06px;font-size:13.4px;color:#464646;font-weight:normal;font-family:'Liberation Sans',sans-serif;letter-spacing:-0.030px;">Suspicious I...</div>
<div class="t" style="left:1660px;top:408.27px;font-size:14px;color:#2e2e2e;font-weight:normal;font-family:'Liberation Mono',monospace;-webkit-text-stroke:0.15px #2e2e2e;">192.168.0…</div>
<div class="t" style="left:1770px;top:408.27px;font-size:14px;color:#2e2e2e;font-weight:normal;font-family:'Liberation Mono',monospace;-webkit-text-stroke:0.15px #2e2e2e;">192.168.0…</div>
<div class="t" style="left:1880px;top:406.75px;font-size:13.759px;color:#464646;font-weight:normal;font-family:'Liberation Sans',sans-serif;">IP</div>
<div class="b" style="left:1990px;top:404px;width:32px;height:20px;background:#fff4a6"></div>
<div class="t" style="left:1806px;width:400px;text-align:center;top:408.64px;font-size:12px;color:#1e1e1e;font-weight:bold;font-family:'Liberation Sans',sans-serif;letter-spacing:-0.3px;">EXT</div>
<div class="t" style="left:2100px;top:406.91px;font-size:13.569px;color:#464646;font-weight:normal;font-family:'Liberation Sans',sans-serif;">A sequence ...</div>
<div class="t" style="right:263px;top:406.55px;font-size:14px;color:#262626;font-weight:normal;font-family:'Liberation Sans',sans-serif;">37</div>
<svg class="b" style="left:2320px;top:409px" width="16" height="12" viewBox="0 0 16 12"><path d="M1 1 L14.6 1 L11.8 6 L14.6 11 L1 11 Z" fill="none" stroke="#1a1a1a" stroke-width="2" stroke-linejoin="miter"/></svg>
<div class="t" style="right:42px;top:408.27px;font-size:14px;color:#2e2e2e;font-weight:normal;font-family:'Liberation Mono',monospace;-webkit-text-stroke:0.15px #2e2e2e;">8000000001</div>
<div class="b" style="left:280px;top:438px;width:2279px;height:48px;background:#f5f5f5"></div>
<div class="b" style="left:340px;top:453px;width:16px;height:16px;border:1px solid #b3b3b3;border-radius:2px;background:transparent"></div>
<div class="t" style="left:378px;top:456.27px;font-size:14px;color:#2e2e2e;font-weight:normal;font-family:'Liberation Mono',monospace;-webkit-text-stroke:0.15px #2e2e2e;">2020-03-16 18:53:…</div>
<div class="b" style="left:577px;top:454px;width:16px;height:16px;border:1px solid #139583"></div>
<div class="b" style="left:581px;top:461px;width:8px;height:2px;background:#139583"></div>
<div class="b" style="left:584px;top:458px;width:2px;height:8px;background:#139583"></div>
<div class="t" style="left:597px;top:454.75px;font-size:13.764px;color:#2a2a2a;font-weight:bold;font-family:'Liberation Sans',sans-serif;">Suspicious IEC104 Command Sequence: frequent toggles between open and closed state for IOA 104 (4)</div>
<div class="b" style="left:566px;top:462px;width:11px;height:1px;background-image:linear-gradient(to right,#888 50%,transparent 50%);background-size:2px 1px"></div>
<svg class="b" style="left:1375px;top:455px" width="16" height="16" viewBox="0 0 16 16"><rect x="0" y="0" width="16" height="16" fill="#ee3043"/><rect x="7" y="3" width="2" height="7.5" fill="#fff"/><rect x="7" y="11.3" width="2" height="2" fill="#fff"/></svg>
<div class="t" style="left:1550px;top:455.06px;font-size:13.4px;color:#464646;font-weight:normal;font-family:'Liberation Sans',sans-serif;letter-spacing:-0.030px;">Suspicious I...</div>
<div class="t" style="left:1660px;top:456.27px;font-size:14px;color:#2e2e2e;font-weight:normal;font-family:'Liberation Mono',monospace;-webkit-text-stroke:0.15px #2e2e2e;">192.168.0…</div>
<div class="t" style="left:1770px;top:456.27px;font-size:14px;color:#2e2e2e;font-weight:normal;font-family:'Liberation Mono',monospace;-webkit-text-stroke:0.15px #2e2e2e;">192.168.0…</div>
<div class="t" style="left:1880px;top:454.75px;font-size:13.759px;color:#464646;font-weight:normal;font-family:'Liberation Sans',sans-serif;">IP</div>
<div class="b" style="left:1990px;top:452px;width:32px;height:20px;background:#fff4a6"></div>
<div class="t" style="left:1806px;width:400px;text-align:center;top:456.64px;font-size:12px;color:#1e1e1e;font-weight:bold;font-family:'Liberation Sans',sans-serif;letter-spacing:-0.3px;">EXT</div>
<div class="t" style="left:2100px;top:454.91px;font-size:13.569px;color:#464646;font-weight:normal;font-family:'Liberation Sans',sans-serif;">A sequence ...</div>
<div class="t" style="right:263px;top:454.55px;font-size:14px;color:#262626;font-weight:normal;font-family:'Liberation Sans',sans-serif;">36</div>
<svg class="b" style="left:2320px;top:457px" width="16" height="12" viewBox="0 0 16 12"><path d="M1 1 L14.6 1 L11.8 6 L14.6 11 L1 11 Z" fill="none" stroke="#1a1a1a" stroke-width="2" stroke-linejoin="miter"/></svg>
<div class="t" style="right:42px;top:456.27px;font-size:14px;color:#2e2e2e;font-weight:normal;font-family:'Liberation Mono',monospace;-webkit-text-stroke:0.15px #2e2e2e;">8000000001</div>
<div class="b" style="left:340px;top:501px;width:16px;height:16px;border:1px solid #b3b3b3;border-radius:2px;background:transparent"></div>
<div class="t" style="left:378px;top:504.27px;font-size:14px;color:#2e2e2e;font-weight:normal;font-family:'Liberation Mono',monospace;-webkit-text-stroke:0.15px #2e2e2e;">2020-03-16 18:53:…</div>
<div class="b" style="left:577px;top:502px;width:16px;height:16px;border:1px solid #139583"></div>
<div class="b" style="left:581px;top:509px;width:8px;height:2px;background:#139583"></div>
<div class="b" style="left:584px;top:506px;width:2px;height:8px;background:#139583"></div>
<div class="t" style="left:597px;top:502.75px;font-size:13.764px;color:#2a2a2a;font-weight:bold;font-family:'Liberation Sans',sans-serif;">Suspicious IEC104 Command Sequence: frequent toggles between open and closed state for IOA 105 (4)</div>
<div class="b" style="left:566px;top:510px;width:11px;height:1px;background-image:linear-gradient(to right,#888 50%,transparent 50%);background-size:2px 1px"></div>
<svg class="b" style="left:1375px;top:503px" width="16" height="16" viewBox="0 0 16 16"><rect x="0" y="0" width="16" height="16" fill="#ee3043"/><rect x="7" y="3" width="2" height="7.5" fill="#fff"/><rect x="7" y="11.3" width="2" height="2" fill="#fff"/></svg>
<div class="t" style="left:1550px;top:503.06px;font-size:13.4px;color:#464646;font-weight:normal;font-family:'Liberation Sans',sans-serif;letter-spacing:-0.030px;">Suspicious I...</div>
<div class="t" style="left:1660px;top:504.27px;font-size:14px;color:#2e2e2e;font-weight:normal;font-family:'Liberation Mono',monospace;-webkit-text-stroke:0.15px #2e2e2e;">192.168.0…</div>
<div class="t" style="left:1770px;top:504.27px;font-size:14px;color:#2e2e2e;font-weight:normal;font-family:'Liberation Mono',monospace;-webkit-text-stroke:0.15px #2e2e2e;">192.168.0…</div>
<div class="t" style="left:1880px;top:502.75px;font-size:13.759px;color:#464646;font-weight:normal;font-family:'Liberation Sans',sans-serif;">IP</div>
<div class="b" style="left:1990px;top:500px;width:32px;height:20px;background:#fff4a6"></div>
<div class="t" style="left:1806px;width:400px;text-align:center;top:504.64px;font-size:12px;color:#1e1e1e;font-weight:bold;font-family:'Liberation Sans',sans-serif;letter-spacing:-0.3px;">EXT</div>
<div class="t" style="left:2100px;top:502.91px;font-size:13.569px;color:#464646;font-weight:normal;font-family:'Liberation Sans',sans-serif;">A sequence ...</div>
<div class="t" style="right:263px;top:502.55px;font-size:14px;color:#262626;font-weight:normal;font-family:'Liberation Sans',sans-serif;">35</div>
<svg class="b" style="left:2320px;top:505px" width="16" height="12" viewBox="0 0 16 12"><path d="M1 1 L14.6 1 L11.8 6 L14.6 11 L1 11 Z" fill="none" stroke="#1a1a1a" stroke-width="2" stroke-linejoin="miter"/></svg>
<div class="t" style="right:42px;top:504.27px;font-size:14px;color:#2e2e2e;font-weight:normal;font-family:'Liberation Mono',monospace;-webkit-text-stroke:0.15px #2e2e2e;">8000000001</div>
<div class="b" style="left:280px;top:534px;width:2279px;height:48px;background:#f5f5f5"></div>
<div class="b" style="left:340px;top:549px;width:16px;height:16px;border:1px solid #b3b3b3;border-radius:2px;background:transparent"></div>
<div class="t" style="left:378px;top:552.27px;font-size:14px;color:#2e2e2e;font-weight:normal;font-family:'Liberation Mono',monospace;-webkit-text-stroke:0.15px #2e2e2e;">2020-03-16 18:53:…</div>
<div class="b" style="left:577px;top:550px;width:16px;height:16px;border:1px solid #139583"></div>
<div class="b" style="left:581px;top:557px;width:8px;height:2px;background:#139583"></div>
<div class="b" style="left:584px;top:554px;width:2px;height:8px;background:#139583"></div>
<div class="t" style="left:597px;top:550.75px;font-size:13.764px;color:#2a2a2a;font-weight:bold;font-family:'Liberation Sans',sans-serif;">Suspicious IEC104 Command Sequence: frequent toggles between open and closed state for IOA 106 (4)</div>
<div class="b" style="left:566px;top:558px;width:11px;height:1px;background-image:linear-gradient(to right,#888 50%,transparent 50%);background-size:2px 1px"></div>
<svg class="b" style="left:1375px;top:551px" width="16" height="16" viewBox="0 0 16 16"><rect x="0" y="0" width="16" height="16" fill="#ee3043"/><rect x="7" y="3" width="2" height="7.5" fill="#fff"/><rect x="7" y="11.3" width="2" height="2" fill="#fff"/></svg>
<div class="t" style="left:1550px;top:551.06px;font-size:13.4px;color:#464646;font-weight:normal;font-family:'Liberation Sans',sans-serif;letter-spacing:-0.030px;">Suspicious I...</div>
<div class="t" style="left:1660px;top:552.27px;font-size:14px;color:#2e2e2e;font-weight:normal;font-family:'Liberation Mono',monospace;-webkit-text-stroke:0.15px #2e2e2e;">192.168.0…</div>
<div class="t" style="left:1770px;top:552.27px;font-size:14px;color:#2e2e2e;font-weight:normal;font-family:'Liberation Mono',monospace;-webkit-text-stroke:0.15px #2e2e2e;">192.168.0…</div>
<div class="t" style="left:1880px;top:550.75px;font-size:13.759px;color:#464646;font-weight:normal;font-family:'Liberation Sans',sans-serif;">IP</div>
<div class="b" style="left:1990px;top:548px;width:32px;height:20px;background:#fff4a6"></div>
<div class="t" style="left:1806px;width:400px;text-align:center;top:552.64px;font-size:12px;color:#1e1e1e;font-weight:bold;font-family:'Liberation Sans',sans-serif;letter-spacing:-0.3px;">EXT</div>
<div class="t" style="left:2100px;top:550.91px;font-size:13.569px;color:#464646;font-weight:normal;font-family:'Liberation Sans',sans-serif;">A sequence ...</div>
<div class="t" style="right:263px;top:550.55px;font-size:14px;color:#262626;font-weight:normal;font-family:'Liberation Sans',sans-serif;">34</div>
<svg class="b" style="left:2320px;top:553px" width="16" height="12" viewBox="0 0 16 12"><path d="M1 1 L14.6 1 L11.8 6 L14.6 11 L1 11 Z" fill="none" stroke="#1a1a1a" stroke-width="2" stroke-linejoin="miter"/></svg>
<div class="t" style="right:42px;top:552.27px;font-size:14px;color:#2e2e2e;font-weight:normal;font-family:'Liberation Mono',monospace;-webkit-text-stroke:0.15px #2e2e2e;">8000000001</div>
<div class="b" style="left:340px;top:597px;width:16px;height:16px;border:1px solid #b3b3b3;border-radius:2px;background:transparent"></div>
<div class="t" style="left:378px;top:600.27px;font-size:14px;color:#2e2e2e;font-weight:normal;font-family:'Liberation Mono',monospace;-webkit-text-stroke:0.15px #2e2e2e;">2020-03-16 18:53:…</div>
<div class="b" style="left:557px;top:598px;width:16px;height:16px;border:1px solid #139583"></div>
<div class="b" style="left:561px;top:605px;width:8px;height:2px;background:#139583"></div>
<div class="b" style="left:564px;top:602px;width:2px;height:8px;background:#139583"></div>
<div class="t" style="left:577px;top:598.77px;font-size:13.741px;color:#2a2a2a;font-weight:bold;font-family:'Liberation Sans',sans-serif;">Assets with IP addresses 192.168.0.133 and 192.168.0.204 have exchanged a large number of system commands (25)</div>
<svg class="b" style="left:1375px;top:599px" width="16" height="16" viewBox="0 0 16 16"><rect x="0" y="0" width="16" height="16" fill="#ee3043"/><rect x="7" y="3" width="2" height="7.5" fill="#fff"/><rect x="7" y="11.3" width="2" height="2" fill="#fff"/></svg>
<div class="t" style="left:1550px;top:598.66px;font-size:13.863px;color:#464646;font-weight:normal;font-family:'Liberation Sans',sans-serif;">Group even...</div>
<div class="t" style="left:1660px;top:600.27px;font-size:14px;color:#2e2e2e;font-weight:normal;font-family:'Liberation Mono',monospace;-webkit-text-stroke:0.15px #2e2e2e;">192.168.0…</div>
<div class="t" style="left:1770px;top:600.27px;font-size:14px;color:#2e2e2e;font-weight:normal;font-family:'Liberation Mono',monospace;-webkit-text-stroke:0.15px #2e2e2e;">192.168.0…</div>
<div class="t" style="left:1880px;top:598.75px;font-size:13.759px;color:#464646;font-weight:normal;font-family:'Liberation Sans',sans-serif;">IP</div>
<div class="b" style="left:1990px;top:596px;width:32px;height:20px;background:#fff4a6"></div>
<div class="t" style="left:1806px;width:400px;text-align:center;top:600.64px;font-size:12px;color:#1e1e1e;font-weight:bold;font-family:'Liberation Sans',sans-serif;letter-spacing:-0.3px;">EXT</div>
<div class="t" style="left:2100px;top:598.91px;font-size:13.569px;color:#464646;font-weight:normal;font-family:'Liberation Sans',sans-serif;">A sequence ...</div>
<div class="t" style="right:263px;top:598.55px;font-size:14px;color:#262626;font-weight:normal;font-family:'Liberation Sans',sans-serif;">40</div>
<svg class="b" style="left:2320px;top:601px" width="16" height="12" viewBox="0 0 16 12"><path d="M1 1 L14.6 1 L11.8 6 L14.6 11 L1 11 Z" fill="none" stroke="#1a1a1a" stroke-width="2" stroke-linejoin="miter"/></svg>
<div class="t" style="right:42px;top:600.27px;font-size:14px;color:#2e2e2e;font-weight:normal;font-family:'Liberation Mono',monospace;-webkit-text-stroke:0.15px #2e2e2e;">8000000001</div>
<div class="b" style="left:280px;top:630px;width:2279px;height:48px;background:#f5f5f5"></div>
<div class="b" style="left:340px;top:645px;width:16px;height:16px;border:1px solid #b3b3b3;border-radius:2px;background:transparent"></div>
<div class="t" style="left:378px;top:648.27px;font-size:14px;color:#2e2e2e;font-weight:normal;font-family:'Liberation Mono',monospace;-webkit-text-stroke:0.15px #2e2e2e;">2020-03-16 18:53:…</div>
<div class="b" style="left:562px;top:651px;width:6px;height:6px;background:#139583;border-radius:3px"></div>
<div class="t" style="left:577px;top:646.29px;font-size:14.31px;color:#464646;font-weight:normal;font-family:'Liberation Sans',sans-serif;">Unauthorized network interaction detected (ARP)</div>
<svg class="b" style="left:1375px;top:648px" width="16" height="14" viewBox="0 0 16 14"><path d="M8 0.5 L15.8 14 L0.2 14 Z" fill="#ffa800"/><rect x="7" y="5.6" width="2" height="4" fill="#fff"/><rect x="7" y="10.5" width="2" height="1.5" fill="#fff"/></svg>
<div class="t" style="left:1660px;top:648.27px;font-size:14px;color:#2e2e2e;font-weight:normal;font-family:'Liberation Mono',monospace;-webkit-text-stroke:0.15px #2e2e2e;">c8:5b:76:…</div>
<div class="t" style="left:1770px;top:648.27px;font-size:14px;color:#2e2e2e;font-weight:normal;font-family:'Liberation Mono',monospace;-webkit-text-stroke:0.15px #2e2e2e;">00:0c:29:…</div>
<div class="t" style="left:1880px;top:647.06px;font-size:13.4px;color:#464646;font-weight:normal;font-family:'Liberation Sans',sans-serif;letter-spacing:-1.176px;">ARP</div>
<div class="b" style="left:1990px;top:644px;width:32px;height:20px;background:#a0f0d3"></div>
<div class="t" style="left:1806px;width:400px;text-align:center;top:648.64px;font-size:12px;color:#1e1e1e;font-weight:bold;font-family:'Liberation Sans',sans-serif;letter-spacing:-0.3px;">NIC</div>
<div class="t" style="left:2100px;top:646.60px;font-size:13.934px;color:#464646;font-weight:normal;font-family:'Liberation Sans',sans-serif;">Unauthoriz...</div>
<div class="t" style="right:263px;top:646.55px;font-size:14px;color:#262626;font-weight:normal;font-family:'Liberation Sans',sans-serif;">4</div>
<svg class="b" style="left:2320px;top:649px" width="16" height="12" viewBox="0 0 16 12"><path d="M1 1 L14.6 1 L11.8 6 L14.6 11 L1 11 Z" fill="none" stroke="#1a1a1a" stroke-width="2" stroke-linejoin="miter"/></svg>
<div class="t" style="right:42px;top:648.27px;font-size:14px;color:#2e2e2e;font-weight:normal;font-family:'Liberation Mono',monospace;-webkit-text-stroke:0.15px #2e2e2e;">4000002601</div>
<div class="b" style="left:340px;top:693px;width:16px;height:16px;border:1px solid #b3b3b3;border-radius:2px;background:transparent"></div>
<div class="t" style="left:378px;top:696.27px;font-size:14px;color:#2e2e2e;font-weight:normal;font-family:'Liberation Mono',monospace;-webkit-text-stroke:0.15px #2e2e2e;">2020-03-16 18:53:…</div>
<div class="b" style="left:562px;top:699px;width:6px;height:6px;background:#139583;border-radius:3px"></div>
<div class="t" style="left:577px;top:694.58px;font-size:13.967px;color:#464646;font-weight:normal;font-family:'Liberation Sans',sans-serif;">Detected new MAC address 00:0c:29:72:fd:2c for asset with the IP address 192.168.0.204</div>
<svg class="b" style="left:1375px;top:695px" width="16" height="16" viewBox="0 0 16 16"><rect x="0" y="0" width="16" height="16" fill="#ee3043"/><rect x="7" y="3" width="2" height="7.5" fill="#fff"/><rect x="7" y="11.3" width="2" height="2" fill="#fff"/></svg>
<div class="t" style="left:1660px;top:696.27px;font-size:14px;color:#2e2e2e;font-weight:normal;font-family:'Liberation Mono',monospace;-webkit-text-stroke:0.15px #2e2e2e;">00:0c:29:…</div>
<div class="t" style="left:1770px;top:696.27px;font-size:14px;color:#2e2e2e;font-weight:normal;font-family:'Liberation Mono',monospace;-webkit-text-stroke:0.15px #2e2e2e;">ff:ff:ff:…</div>
<div class="t" style="left:1880px;top:695.06px;font-size:13.4px;color:#464646;font-weight:normal;font-family:'Liberation Sans',sans-serif;letter-spacing:-1.176px;">ARP</div>
<div class="b" style="left:1990px;top:692px;width:32px;height:20px;background:#d2d2f8"></div>
<div class="t" style="left:1806px;width:400px;text-align:center;top:696.64px;font-size:12px;color:#1e1e1e;font-weight:bold;font-family:'Liberation Sans',sans-serif;letter-spacing:-0.3px;">AM</div>
<div class="t" style="left:2100px;top:694.73px;font-size:13.789px;color:#464646;font-weight:normal;font-family:'Liberation Sans',sans-serif;">Detected M...</div>
<div class="t" style="right:263px;top:694.55px;font-size:14px;color:#262626;font-weight:normal;font-family:'Liberation Sans',sans-serif;">7</div>
<svg class="b" style="left:2320px;top:697px" width="16" height="12" viewBox="0 0 16 12"><path d="M1 1 L14.6 1 L11.8 6 L14.6 11 L1 11 Z" fill="none" stroke="#1a1a1a" stroke-width="2" stroke-linejoin="miter"/></svg>
<div class="t" style="right:42px;top:696.27px;font-size:14px;color:#2e2e2e;font-weight:normal;font-family:'Liberation Mono',monospace;-webkit-text-stroke:0.15px #2e2e2e;">4000005010</div>
<div class="b" style="left:280px;top:726px;width:2279px;height:48px;background:#f5f5f5"></div>
<div class="b" style="left:340px;top:741px;width:16px;height:16px;border:1px solid #b3b3b3;border-radius:2px;background:transparent"></div>
<div class="t" style="left:378px;top:744.27px;font-size:14px;color:#2e2e2e;font-weight:normal;font-family:'Liberation Mono',monospace;-webkit-text-stroke:0.15px #2e2e2e;">2020-03-16 18:53:…</div>
<div class="b" style="left:562px;top:747px;width:6px;height:6px;background:#139583;border-radius:3px"></div>
<div class="t" style="left:577px;top:742.52px;font-size:14.038px;color:#464646;font-weight:normal;font-family:'Liberation Sans',sans-serif;">Rule from the ics_specific set (system set of rules) was triggered</div>
<svg class="b" style="left:1375px;top:743px" width="16" height="16" viewBox="0 0 16 16"><rect x="0" y="0" width="16" height="16" fill="#ee3043"/><rect x="7" y="3" width="2" height="7.5" fill="#fff"/><rect x="7" y="11.3" width="2" height="2" fill="#fff"/></svg>
<div class="t" style="left:1550px;top:742.71px;font-size:13.811px;color:#464646;font-weight:normal;font-family:'Liberation Sans',sans-serif;">Iec104 swit...</div>
<div class="t" style="left:1660px;top:744.27px;font-size:14px;color:#2e2e2e;font-weight:normal;font-family:'Liberation Mono',monospace;-webkit-text-stroke:0.15px #2e2e2e;">192.168.0…</div>
<div class="t" style="left:1770px;top:744.27px;font-size:14px;color:#2e2e2e;font-weight:normal;font-family:'Liberation Mono',monospace;-webkit-text-stroke:0.15px #2e2e2e;">192.168.0…</div>
<div class="t" style="left:1880px;top:743.06px;font-size:13.4px;color:#464646;font-weight:normal;font-family:'Liberation Sans',sans-serif;letter-spacing:-0.400px;">TCP</div>
<div class="b" style="left:1990px;top:740px;width:32px;height:20px;background:#d2d2f8"></div>
<div class="t" style="left:1806px;width:400px;text-align:center;top:744.64px;font-size:12px;color:#1e1e1e;font-weight:bold;font-family:'Liberation Sans',sans-serif;letter-spacing:-0.3px;">IDS</div>
<div class="t" style="left:2100px;top:742.64px;font-size:13.895px;color:#464646;font-weight:normal;font-family:'Liberation Sans',sans-serif;">Intrusion De...</div>
<div class="t" style="right:263px;top:742.55px;font-size:14px;color:#262626;font-weight:normal;font-family:'Liberation Sans',sans-serif;">1</div>
<svg class="b" style="left:2320px;top:745px" width="16" height="12" viewBox="0 0 16 12"><path d="M1 1 L14.6 1 L11.8 6 L14.6 11 L1 11 Z" fill="none" stroke="#1a1a1a" stroke-width="2" stroke-linejoin="miter"/></svg>
<div class="t" style="right:42px;top:744.27px;font-size:14px;color:#2e2e2e;font-weight:normal;font-family:'Liberation Mono',monospace;-webkit-text-stroke:0.15px #2e2e2e;">4000003000</div>
<div class="b" style="left:340px;top:789px;width:16px;height:16px;border:1px solid #b3b3b3;border-radius:2px;background:transparent"></div>
<div class="t" style="left:378px;top:792.27px;font-size:14px;color:#2e2e2e;font-weight:normal;font-family:'Liberation Mono',monospace;-webkit-text-stroke:0.15px #2e2e2e;">2020-03-16 18:53:…</div>
<div class="b" style="left:562px;top:795px;width:6px;height:6px;background:#139583;border-radius:3px"></div>
<div class="t" style="left:577px;top:790.63px;font-size:13.904px;color:#464646;font-weight:normal;font-family:'Liberation Sans',sans-serif;">Detected new asset with the address 192.168.0.133</div>
<svg class="b" style="left:1375px;top:791px" width="16" height="16" viewBox="0 0 16 16"><rect x="0" y="0" width="16" height="16" fill="#ee3043"/><rect x="7" y="3" width="2" height="7.5" fill="#fff"/><rect x="7" y="11.3" width="2" height="2" fill="#fff"/></svg>
<div class="t" style="left:1660px;top:792.27px;font-size:14px;color:#2e2e2e;font-weight:normal;font-family:'Liberation Mono',monospace;-webkit-text-stroke:0.15px #2e2e2e;">c8:5b:76:…</div>
<div class="t" style="left:1770px;top:792.27px;font-size:14px;color:#2e2e2e;font-weight:normal;font-family:'Liberation Mono',monospace;-webkit-text-stroke:0.15px #2e2e2e;">00:0c:29:…</div>
<div class="t" style="left:1880px;top:791.06px;font-size:13.4px;color:#464646;font-weight:normal;font-family:'Liberation Sans',sans-serif;letter-spacing:-1.176px;">ARP</div>
<div class="b" style="left:1990px;top:788px;width:32px;height:20px;background:#d2d2f8"></div>
<div class="t" style="left:1806px;width:400px;text-align:center;top:792.64px;font-size:12px;color:#1e1e1e;font-weight:bold;font-family:'Liberation Sans',sans-serif;letter-spacing:-0.3px;">AM</div>
<div class="t" style="left:2100px;top:791.04px;font-size:13.416px;color:#464646;font-weight:normal;font-family:'Liberation Sans',sans-serif;">New asset d...</div>
<div class="t" style="right:263px;top:790.55px;font-size:14px;color:#262626;font-weight:normal;font-family:'Liberation Sans',sans-serif;">8</div>
<svg class="b" style="left:2320px;top:793px" width="16" height="12" viewBox="0 0 16 12"><path d="M1 1 L14.6 1 L11.8 6 L14.6 11 L1 11 Z" fill="none" stroke="#1a1a1a" stroke-width="2" stroke-linejoin="miter"/></svg>
<div class="t" style="right:42px;top:792.27px;font-size:14px;color:#2e2e2e;font-weight:normal;font-family:'Liberation Mono',monospace;-webkit-text-stroke:0.15px #2e2e2e;">4000005003</div>
<div class="b" style="left:280px;top:822px;width:2279px;height:48px;background:#f5f5f5"></div>
<div class="b" style="left:340px;top:837px;width:16px;height:16px;border:1px solid #b3b3b3;border-radius:2px;background:transparent"></div>
<div class="t" style="left:378px;top:840.27px;font-size:14px;color:#2e2e2e;font-weight:normal;font-family:'Liberation Mono',monospace;-webkit-text-stroke:0.15px #2e2e2e;">2020-03-16 18:53:…</div>
<div class="b" style="left:562px;top:843px;width:6px;height:6px;background:#139583;border-radius:3px"></div>
<div class="t" style="left:577px;top:838.29px;font-size:14.31px;color:#464646;font-weight:normal;font-family:'Liberation Sans',sans-serif;">Unauthorized network interaction detected (ARP)</div>
<svg class="b" style="left:1375px;top:840px" width="16" height="14" viewBox="0 0 16 14"><path d="M8 0.5 L15.8 14 L0.2 14 Z" fill="#ffa800"/><rect x="7" y="5.6" width="2" height="4" fill="#fff"/><rect x="7" y="10.5" width="2" height="1.5" fill="#fff"/></svg>
<div class="t" style="left:1660px;top:840.27px;font-size:14px;color:#2e2e2e;font-weight:normal;font-family:'Liberation Mono',monospace;-webkit-text-stroke:0.15px #2e2e2e;">00:0c:29:…</div>
<div class="t" style="left:1770px;top:840.27px;font-size:14px;color:#2e2e2e;font-weight:normal;font-family:'Liberation Mono',monospace;-webkit-text-stroke:0.15px #2e2e2e;">ff:ff:ff:…</div>
<div class="t" style="left:1880px;top:839.06px;font-size:13.4px;color:#464646;font-weight:normal;font-family:'Liberation Sans',sans-serif;letter-spacing:-1.176px;">ARP</div>
<div class="b" style="left:1990px;top:836px;width:32px;height:20px;background:#a0f0d3"></div>
<div class="t" style="left:1806px;width:400px;text-align:center;top:840.64px;font-size:12px;color:#1e1e1e;font-weight:bold;font-family:'Liberation Sans',sans-serif;letter-spacing:-0.3px;">NIC</div>
<div class="t" style="left:2100px;top:838.60px;font-size:13.934px;color:#464646;font-weight:normal;font-family:'Liberation Sans',sans-serif;">Unauthoriz...</div>
<div class="t" style="right:263px;top:838.55px;font-size:14px;color:#262626;font-weight:normal;font-family:'Liberation Sans',sans-serif;">3</div>
<svg class="b" style="left:2320px;top:841px" width="16" height="12" viewBox="0 0 16 12"><path d="M1 1 L14.6 1 L11.8 6 L14.6 11 L1 11 Z" fill="none" stroke="#1a1a1a" stroke-width="2" stroke-linejoin="miter"/></svg>
<div class="t" style="right:42px;top:840.27px;font-size:14px;color:#2e2e2e;font-weight:normal;font-family:'Liberation Mono',monospace;-webkit-text-stroke:0.15px #2e2e2e;">4000002601</div>
<div class="b" style="left:340px;top:885px;width:16px;height:16px;border:1px solid #b3b3b3;border-radius:2px;background:transparent"></div>
<div class="t" style="left:378px;top:888.27px;font-size:14px;color:#2e2e2e;font-weight:normal;font-family:'Liberation Mono',monospace;-webkit-text-stroke:0.15px #2e2e2e;">2020-03-16 18:53:…</div>
<div class="b" style="left:562px;top:891px;width:6px;height:6px;background:#139583;border-radius:3px"></div>
<div class="t" style="left:577px;top:886.51px;font-size:14.044px;color:#464646;font-weight:normal;font-family:'Liberation Sans',sans-serif;">Received new information about asset with the address 192.168.0.133</div>
<svg class="b" style="left:1375px;top:887px" width="16" height="16" viewBox="0 0 16 16"><circle cx="8" cy="8" r="8" fill="#4aa5a8"/><rect x="7" y="6.5" width="2" height="5.8" fill="#fff"/><rect x="7" y="3.5" width="2" height="2" fill="#fff"/></svg>
<div class="t" style="left:1660px;top:888.27px;font-size:14px;color:#2e2e2e;font-weight:normal;font-family:'Liberation Mono',monospace;-webkit-text-stroke:0.15px #2e2e2e;">192.168.0…</div>
<div class="t" style="left:1770px;top:888.27px;font-size:14px;color:#2e2e2e;font-weight:normal;font-family:'Liberation Mono',monospace;-webkit-text-stroke:0.15px #2e2e2e;">192.168.0…</div>
<div class="t" style="left:1880px;top:886.62px;font-size:13.917px;color:#464646;font-weight:normal;font-family:'Liberation Sans',sans-serif;">IEC 60870-...</div>
<div class="b" style="left:1990px;top:884px;width:32px;height:20px;background:#d2d2f8"></div>
<div class="t" style="left:1806px;width:400px;text-align:center;top:888.64px;font-size:12px;color:#1e1e1e;font-weight:bold;font-family:'Liberation Sans',sans-serif;letter-spacing:-0.3px;">AM</div>
<div class="t" style="left:2100px;top:887.06px;font-size:13.4px;color:#464646;font-weight:normal;font-family:'Liberation Sans',sans-serif;letter-spacing:-0.207px;">Asset Asset ...</div>
<div class="t" style="right:263px;top:886.55px;font-size:14px;color:#262626;font-weight:normal;font-family:'Liberation Sans',sans-serif;">11</div>
<svg class="b" style="left:2320px;top:889px" width="16" height="12" viewBox="0 0 16 12"><path d="M1 1 L14.6 1 L11.8 6 L14.6 11 L1 11 Z" fill="none" stroke="#1a1a1a" stroke-width="2" stroke-linejoin="miter"/></svg>
<div class="t" style="right:42px;top:888.27px;font-size:14px;color:#2e2e2e;font-weight:normal;font-family:'Liberation Mono',monospace;-webkit-text-stroke:0.15px #2e2e2e;">4000005004</div>
<div class="b" style="left:280px;top:918px;width:2279px;height:48px;background:#f5f5f5"></div>
<div class="b" style="left:340px;top:933px;width:16px;height:16px;border:1px solid #b3b3b3;border-radius:2px;background:transparent"></div>
<div class="t" style="left:378px;top:936.27px;font-size:14px;color:#2e2e2e;font-weight:normal;font-family:'Liberation Mono',monospace;-webkit-text-stroke:0.15px #2e2e2e;">2020-03-16 18:53:…</div>
<div class="b" style="left:562px;top:939px;width:6px;height:6px;background:#139583;border-radius:3px"></div>
<div class="t" style="left:577px;top:934.18px;font-size:14.436px;color:#464646;font-weight:normal;font-family:'Liberation Sans',sans-serif;">Unauthorized network interaction detected (IEC 60870-5-104)</div>
<svg class="b" style="left:1375px;top:936px" width="16" height="14" viewBox="0 0 16 14"><path d="M8 0.5 L15.8 14 L0.2 14 Z" fill="#ffa800"/><rect x="7" y="5.6" width="2" height="4" fill="#fff"/><rect x="7" y="10.5" width="2" height="1.5" fill="#fff"/></svg>
<div class="t" style="left:1660px;top:936.27px;font-size:14px;color:#2e2e2e;font-weight:normal;font-family:'Liberation Mono',monospace;-webkit-text-stroke:0.15px #2e2e2e;">192.168.0…</div>
<div class="t" style="left:1770px;top:936.27px;font-size:14px;color:#2e2e2e;font-weight:normal;font-family:'Liberation Mono',monospace;-webkit-text-stroke:0.15px #2e2e2e;">192.168.0…</div>
<div class="t" style="left:1880px;top:934.62px;font-size:13.917px;color:#464646;font-weight:normal;font-family:'Liberation Sans',sans-serif;">IEC 60870-...</div>
<div class="b" style="left:1990px;top:932px;width:32px;height:20px;background:#a0f0d3"></div>
<div class="t" style="left:1806px;width:400px;text-align:center;top:936.64px;font-size:12px;color:#1e1e1e;font-weight:bold;font-family:'Liberation Sans',sans-serif;letter-spacing:-0.3px;">NIC</div>
<div class="t" style="left:2100px;top:934.60px;font-size:13.934px;color:#464646;font-weight:normal;font-family:'Liberation Sans',sans-serif;">Unauthoriz...</div>
<div class="t" style="right:263px;top:934.55px;font-size:14px;color:#262626;font-weight:normal;font-family:'Liberation Sans',sans-serif;">2</div>
<svg class="b" style="left:2320px;top:937px" width="16" height="12" viewBox="0 0 16 12"><path d="M1 1 L14.6 1 L11.8 6 L14.6 11 L1 11 Z" fill="none" stroke="#1a1a1a" stroke-width="2" stroke-linejoin="miter"/></svg>
<div class="t" style="right:42px;top:936.27px;font-size:14px;color:#2e2e2e;font-weight:normal;font-family:'Liberation Mono',monospace;-webkit-text-stroke:0.15px #2e2e2e;">4000002601</div>
<div class="b" style="left:565px;top:279px;width:1px;height:279px;background-image:linear-gradient(to bottom,#888 50%,transparent 50%);background-size:1px 2px"></div>
</body></html>
